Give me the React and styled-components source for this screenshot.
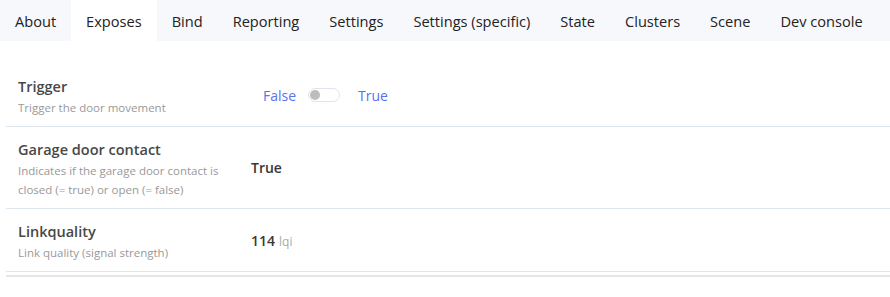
import styled, { createGlobalStyle } from 'styled-components';

const TABS = [
  'About',
  'Exposes',
  'Bind',
  'Reporting',
  'Settings',
  'Settings (specific)',
  'State',
  'Clusters',
  'Scene',
  'Dev console',
];

const GlobalStyle = createGlobalStyle`
  body {
    margin: 0;
    background: #fff;
    font-family: "Open Sans", "Noto Sans", sans-serif;
    color: #333;
  }
`;

function App() {
  return (
    <>
      <GlobalStyle />
      <TabBar>
        {TABS.map(tab => (
          <Tab key={tab} $active={tab === 'Exposes'}>
            {tab}
          </Tab>
        ))}
      </TabBar>
      <Content>
        <Table>
          <Row>
            <Label>
              <Title>Trigger</Title>
              <Desc>Trigger the door movement</Desc>
            </Label>
            <Value>
              <Toggle>
                <ToggleText>False</ToggleText>
                <Switch>
                  <Knob />
                </Switch>
                <ToggleText>True</ToggleText>
              </Toggle>
            </Value>
          </Row>
          <Row>
            <Label>
              <Title>Garage door contact</Title>
              <Desc>
                Indicates if the garage door contact is closed (= true) or open
                (= false)
              </Desc>
            </Label>
            <Value>
              <Strong>True</Strong>
            </Value>
          </Row>
          <Row>
            <Label>
              <Title>Linkquality</Title>
              <Desc>Link quality (signal strength)</Desc>
            </Label>
            <Value>
              <Strong>114</Strong>
              <Unit>lqi</Unit>
            </Value>
          </Row>
        </Table>
      </Content>
    </>
  );
}

const TabBar = styled.nav`
  display: flex;
  height: 41px;
  background: #f7f8fc;
`;

const Tab = styled.div`
  display: flex;
  align-items: center;
  padding: 0 15px;
  font-size: 14.6px;
  color: #222;
  white-space: nowrap;
  background: ${p => (p.$active ? '#fff' : 'transparent')};
`;

const Content = styled.div`
  padding: 23px 0 0 6px;
`;

const Table = styled.div`
  border-bottom: 2px solid #e4e7ea;
  padding-bottom: 3px;
`;

const Row = styled.div`
  display: flex;
  align-items: center;
  border-bottom: 1px solid #dde6ee;
`;

const Label = styled.div`
  width: 209px;
  padding: 12px 12px 9px;
  flex-shrink: 0;
`;

const Title = styled.div`
  font-size: 14.5px;
  line-height: 22px;
  font-weight: 600;
  color: #484848;
`;

const Desc = styled.div`
  font-size: 11.5px;
  line-height: 19px;
  color: #999;
`;

const Value = styled.div`
  display: flex;
  align-items: baseline;
  gap: 4px;
  padding-left: 12px;
`;

const Strong = styled.span`
  font-size: 14px;
  font-weight: 600;
  color: #383838;
`;

const Unit = styled.span`
  font-size: 12px;
  color: #aaa;
`;

const Toggle = styled.div`
  display: flex;
  align-items: center;
  padding-left: 12px;
  gap: 12px;
`;

const ToggleText = styled.span`
  font-size: 14px;
  color: #5a72f0;
  &:last-child {
    margin-left: 6px;
  }
`;

const Switch = styled.div`
  width: 28px;
  height: 12px;
  border: 1px solid #dfe5ec;
  border-radius: 8px;
  display: flex;
  align-items: center;
  padding: 0 1px;
`;

const Knob = styled.div`
  width: 10px;
  height: 10px;
  border-radius: 50%;
  background: #bdbdbd;
`;

export default App;
